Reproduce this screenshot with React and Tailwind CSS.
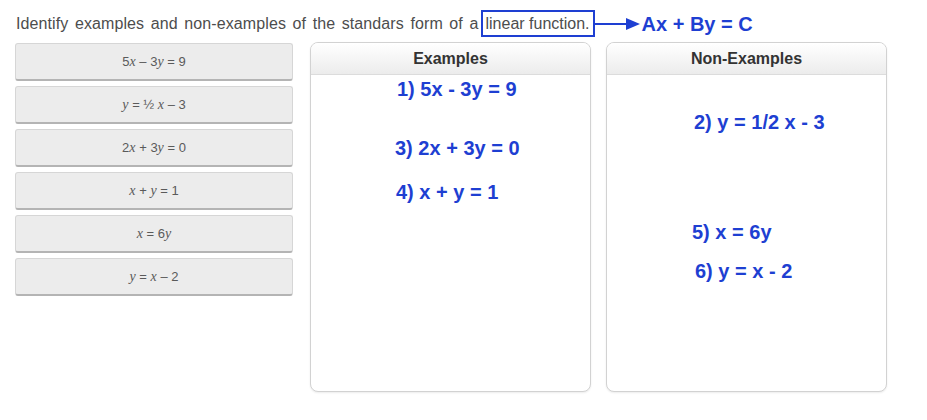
const tiles = [
  [["n", "5"], ["v", "x"], ["n", " – 3"], ["v", "y"], ["n", " = 9"]],
  [["v", "y"], ["n", " = ½ "], ["v", "x"], ["n", " – 3"]],
  [["n", "2"], ["v", "x"], ["n", " + 3"], ["v", "y"], ["n", " = 0"]],
  [["v", "x"], ["n", " + "], ["v", "y"], ["n", " = 1"]],
  [["v", "x"], ["n", " = 6"], ["v", "y"]],
  [["v", "y"], ["n", " = "], ["v", "x"], ["n", " – 2"]],
]

const examples = [
  { text: "1) 5x - 3y = 9", cls: "ml-[86px] mt-[3px]" },
  { text: "3) 2x + 3y = 0", cls: "ml-[84px] mt-[36px]" },
  { text: "4) x + y = 1", cls: "ml-[85px] mt-[21px]" },
]

const nonExamples = [
  { text: "2) y = 1/2 x - 3", cls: "ml-[87px] mt-[36px]" },
  { text: "5) x = 6y", cls: "ml-[85px] mt-[87px]" },
  { text: "6) y = x - 2", cls: "ml-[88px] mt-[16px]" },
]

function Tile({ parts }) {
  return (
    <div className="h-[38px] rounded-[3px] border border-[#d6d6d6] border-b-2 border-b-[#b4b4b4] bg-[#ececec] flex items-center justify-center text-[13px] text-[#5a5a5a]">
      {parts.map(([kind, t], i) =>
        kind === "v" ? (
          <span key={i} className="italic font-['Liberation_Serif',serif] text-[14px] whitespace-pre">{t}</span>
        ) : (
          <span key={i} className="font-['Liberation_Sans',Arial,sans-serif] whitespace-pre">{t}</span>
        )
      )}
    </div>
  )
}

function Panel({ title, items }) {
  return (
    <div className="w-[281px] h-[350px] rounded-[8px] border border-[#d2d2d2] bg-white shadow-[0_1px_2px_rgba(0,0,0,0.08)] overflow-hidden">
      <div className="h-[32px] border-b border-[#dcdcdc] bg-gradient-to-b from-white to-[#ececec] flex items-center justify-center text-[16px] font-bold text-[#333]">
        {title}
      </div>
      {items.map((it) => (
        <div key={it.text} className={`text-[20px] leading-[23px] font-bold text-[#1e3fd2] whitespace-pre ${it.cls}`}>
          {it.text}
        </div>
      ))}
    </div>
  )
}

export default function App() {
  return (
    <div className="w-[927px] h-[420px] bg-white pt-[10px] pl-[15px] font-['Liberation_Sans',Arial,sans-serif]">
      <div className="flex items-center h-[27px] text-[16px] text-[#4d4d4d]">
        <span className="pl-[1px] whitespace-pre [word-spacing:2px] tracking-[0.1px]">Identify examples and non-examples of the standars form of a</span>
        <span className="ml-[3px] h-[27px] pl-[2px] pr-[3px] border-2 border-[#1e3fd2] flex items-center whitespace-pre">linear function.</span>
        <svg width="46" height="14" viewBox="0 0 46 14" className="shrink-0">
          <line x1="0" y1="7" x2="34" y2="7" stroke="#1e3fd2" strokeWidth="2" />
          <polygon points="31,1 45,7 31,13" fill="#1e3fd2" />
        </svg>
        <span className="ml-[1px] text-[20px] font-bold text-[#1e3fd2]">Ax + By = C</span>
      </div>
      <div className="flex mt-[5px]">
        <div className="w-[278px] mt-[1px] flex flex-col gap-[5px]">
          {tiles.map((p, i) => (
            <Tile key={i} parts={p} />
          ))}
        </div>
        <div className="ml-[17px] flex gap-[15px]">
          <Panel title="Examples" items={examples} />
          <Panel title="Non-Examples" items={nonExamples} />
        </div>
      </div>
    </div>
  )
}
